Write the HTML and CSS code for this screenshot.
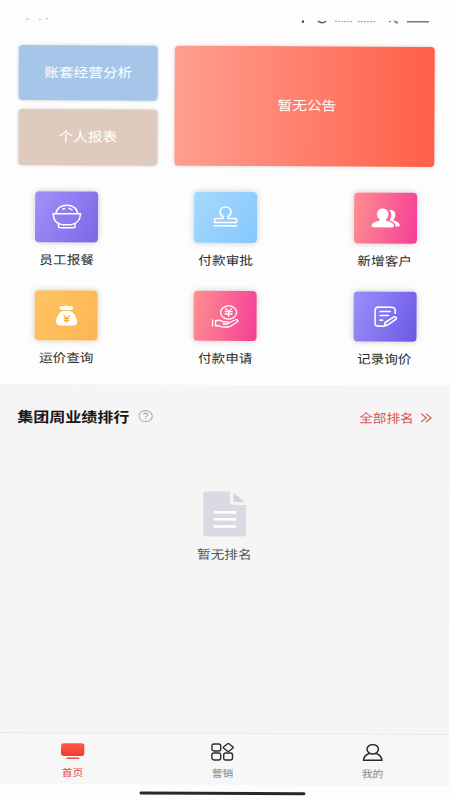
FILE: index.html
```html
<!DOCTYPE html>
<html lang="zh-CN">
<head>
<meta charset="utf-8">
<title>首页</title>
<link rel="stylesheet" href="styles.css">
</head>
<body>
<div class="screen">
  <header class="status">
    <svg width="452" height="26" viewBox="0 0 452 26" fill="none">
      <path d="M26 19h3M39 19h2M46 19l2-1" stroke="#bbb" stroke-width="1"/>
      <path d="M303 19.200v2.200" stroke="#333" stroke-width="2"/>
      <path d="M318 19.800q4.500 3.200 8 0" stroke="#555" stroke-width="1.500"/>
      <path d="M335 20h17M358 20h17" stroke="#aaa" stroke-width="1.200" stroke-dasharray="2 1"/>
      <path d="M389 20h2M394 19l3 2.200v-2" stroke="#777" stroke-width="1.300"/>
      <path d="M407 20h22" stroke="#777" stroke-width="1.500"/>
    </svg>
  </header>
  <main>
    <section class="cards">
      <div class="reports">
        <div class="card blue"><span class="txt">账套经营分析</span></div>
        <div class="card beige"><span class="txt">个人报表</span></div>
      </div>
      <div class="card notice"><span class="txt">暂无公告</span></div>
    </section>

    <section class="menu">
      <div class="item">
        <div class="tile violet">
          <svg width="63" height="50" viewBox="0 0 63 50" fill="none" stroke="#fff" stroke-width="1.500" stroke-linecap="round" stroke-linejoin="round">
            <path d="M18 22.500H45.500C45 29 41 33 36 33.500H27.500C22 33 18.500 29 18 22.500Z"/>
            <path d="M21 22C21.500 17 26 14 31.700 14S42 17 42.500 22"/>
            <path d="M23.500 32v3q0 1.500 2 1.500H38q2 0 2-1.500v-3M28 18l1.500-.8M34 17l3 1.500"/>
          </svg>
        </div>
        <span class="label">员工报餐</span>
      </div>
      <div class="item">
        <div class="tile sky">
          <svg width="63" height="50" viewBox="0 0 63 50" fill="none" stroke="#fff" stroke-width="1.600" stroke-linecap="round" stroke-linejoin="round">
            <path d="M29 26.500V24.500C27.200 23.500 26 22 26 20c0-3 2.500-5 5.500-5s5.500 2 5.500 5c0 2-1.200 3.500-3 4.500v2h7q1.500 0 1.500 1.500v2.500H20.500V28q0-1.500 1.500-1.500Z"/>
            <path d="M20.500 33.800H42.500"/>
          </svg>
        </div>
        <span class="label">付款审批</span>
      </div>
      <div class="item">
        <div class="tile pink">
          <svg width="63" height="50" viewBox="0 0 63 50" fill="#fff">
            <path d="M28.500 15.800c-3.400 0-5.500 2.500-5.500 5.500 0 2.400 1 4.200 2.500 5.200v1.500c-4 .8-8 2.500-8 5 0 1.200 1 1.700 2.500 1.700H37.500c1.500 0 2.500-.5 2.500-1.700 0-2.500-4-4.200-8-5v-1.500c1.500-1 2.500-2.800 2.500-5.200 0-3-2.500-5.500-6-5.500Z"/>
            <path d="M35.300 17.300c3.300-.6 6 1.400 6 4.700 0 2.200-.8 3.800-2 4.700v1.100c3.500.7 6.500 2.500 6.500 4.700 0 1-1 1.300-2 1.300h-2c-.3-3-2.500-4.800-6-6 0-1 0-1.300.5-1.800 1.500-3 1.300-6.200-1-8.700Z"/>
          </svg>
        </div>
        <span class="label">新增客户</span>
      </div>
      <div class="item">
        <div class="tile orange">
          <svg width="63" height="50" viewBox="0 0 63 50" fill="none">
            <path d="M25 17.500c0-2 2-2.300 3.500-1.200 1.500-1.500 4-1.500 5.500 0 2-1.300 4.500-.6 4.500 1.200 0 1.300-1.500 2-2.500 2.300H28c-1.500-.3-3-1-3-2.300ZM27.500 20.800H36c3.500 2 6.500 7 6.500 10.500 0 2.700-1.800 3.900-4.500 3.900H26c-2.700 0-4.500-1.200-4.500-3.900 0-3.500 2.500-8.500 6-10.500Z" fill="#fff"/>
            <path d="M29 25l3 3.200 3-3.200M29.200 28.300h5.600M29.200 30.300h5.600M32 28v4.500" stroke="#f3ab45" stroke-width="1.200"/>
          </svg>
        </div>
        <span class="label">运价查询</span>
      </div>
      <div class="item">
        <div class="tile pink">
          <svg width="63" height="50" viewBox="0 0 63 50" fill="none" stroke="#fff" stroke-width="1.300" stroke-linecap="round" stroke-linejoin="round">
            <ellipse cx="35" cy="21.500" rx="8" ry="6.700"/>
            <path d="M32 17.800l3 2.700 3-2.700M31.500 20.700h7M31.500 23h7M35 20.500v4.800"/>
            <path d="M19 29v6M22 29.500v5.300M22 30c3-1.500 5.500-.5 7.500.8h4c2 0 2 2.200 0 2.200h-4M35 32l6.500-3c2-1 4 .4 2 2l-7 4.500q-1 .5-2.500.5H28l-2.500-1.200H22"/>
          </svg>
        </div>
        <span class="label">付款申请</span>
      </div>
      <div class="item">
        <div class="tile indigo">
          <svg width="63" height="50" viewBox="0 0 63 50" fill="none" stroke="#fff" stroke-width="1.600" stroke-linecap="round" stroke-linejoin="round">
            <path d="M31 34.500H25q-3.500 0-3.500-3V18.500q0-3 3.500-3H38q3.500 0 3.500 3v3"/>
            <path d="M26.500 19.800H36.500M26.500 23.800H35M26.500 28.500h2.500"/>
            <path d="M31 33.200l.5-2.400 8.800-5.600q1-.5 1.800.3l.5.5q.6.800-.3 1.500l-8.500 6q-1.500.6-2.800-.3Z"/>
          </svg>
        </div>
        <span class="label">记录询价</span>
      </div>
    </section>

    <section class="ranking">
      <div class="heading">
        <h1>集团周业绩排行</h1>
        <svg class="help" width="15" height="13" viewBox="0 0 15 13" fill="none" stroke="#a8a8a8">
          <ellipse cx="7.500" cy="6.500" rx="6.600" ry="5.600" stroke-width="1"/>
          <path d="M5.500 5.200c0-2.300 4-2.300 4 0 0 1.300-2 1.300-2 2.600M7.500 8.800v1" stroke-width="1.100"/>
        </svg>
        <a class="all"><span class="alltext">全部排名</span>
          <svg width="12" height="10" viewBox="0 0 12 10" fill="none" stroke="#d9534f" stroke-width="1.200"><path d="M1 .8l5 4.200-5 4.200M5.800.8l5 4.200-5 4.200"/></svg>
        </a>
      </div>
      <div class="empty">
        <svg width="44" height="46" viewBox="0 0 44 46">
          <path d="M2 .5H27V9.500q0 4.500 5 4.500H43.500V43q0 2.500-2.500 2.500H3Q.5 45.500.5 43V2.500Q.5.500 2 .5Z" fill="#dadae5"/>
          <path d="M30.500 1.500L42 11H33q-2.500 0-2.500-2Z" fill="#d3d3de"/>
          <path d="M12 21.300H32.500M12 28.300H32.500M12 35.500H32.500" stroke="#fff" stroke-width="2.600" stroke-linecap="round"/>
        </svg>
        <span class="label">暂无排名</span>
      </div>
    </section>
  </main>

  <nav class="tabs">
    <div class="tab active">
      <svg width="24" height="18" viewBox="0 0 24 18">
        <defs><linearGradient id="tv" x1="0" y1="0" x2="0" y2="1"><stop offset="0" stop-color="#ff5a48"/><stop offset="1" stop-color="#f23a32"/></linearGradient></defs>
        <rect x=".3" y="1" width="23.400" height="12.600" rx="2.500" fill="url(#tv)"/>
        <path d="M6.500 15.900H18" stroke="#f04a42" stroke-width="1.600" stroke-linecap="round"/>
      </svg>
      <span>首页</span>
    </div>
    <div class="tab">
      <svg width="24" height="18" viewBox="0 0 24 18" fill="none" stroke="#2b2b2b" stroke-width="1.400">
        <rect x="1.200" y="1" width="8.800" height="7" rx="2"/>
        <rect x="1.200" y="10" width="8.800" height="7" rx="2"/>
        <rect x="13" y="10" width="8.800" height="7" rx="2"/>
        <path d="M16.500 1q1-.8 2 0l3.500 2.700q1 .8 0 1.600L18.500 8q-1 .8-2 0L13 5.300q-1-.8 0-1.600Z"/>
      </svg>
      <span>营销</span>
    </div>
    <div class="tab">
      <svg width="24" height="18" viewBox="0 0 24 18" fill="none" stroke="#2b2b2b" stroke-width="1.500" stroke-linejoin="round">
        <ellipse cx="12" cy="5.600" rx="5.700" ry="4.800"/>
        <path d="M8.500 9.800C5 11 3 13.500 2.800 16.700H21.200C21 13.500 19 11 15.500 9.800"/>
      </svg>
      <span>我的</span>
    </div>
  </nav>
  <footer class="home"><div class="bar"></div></footer>
</div>
</body>
</html>
```
FILE: styles.css
```css
* { box-sizing: border-box; }

body {
  margin: 0;
  height: 800px;
  overflow: hidden;
  background: #fdfdfd;
  font-family: "Noto Sans CJK SC", sans-serif;
  color: #2c2c2c;
}

.screen {
  width: 452px;
  height: 800px;
  display: flex;
  flex-direction: column;
  transform: rotate(0.25deg);
  transform-origin: 0 0;
}

.status { height: 45px; flex: none; }
.status svg { display: block; }

main { flex: 1; display: flex; flex-direction: column; }

.cards {
  height: 119.5px;
  display: flex;
  gap: 16.7px;
  padding: 0 17px 0 19px;
}

.reports {
  width: 139px;
  display: flex;
  flex-direction: column;
  gap: 9px;
}

.card {
  flex: 1;
  display: flex;
  align-items: center;
  justify-content: center;
  padding-bottom: 2px;
  border-radius: 4px;
  color: #fff;
  font-size: 13.2px;
  box-shadow: 0 0 4px rgba(0, 0, 0, 0.16);
}

.txt { transform: scaleX(1.11); white-space: nowrap; }
.blue { background: #a6c6e9; }
.beige { background: #dfcabe; }
.notice { background: linear-gradient(90deg, #ff9f90, #ff5f48); padding-left: 5px; }

.menu {
  height: 219.5px;
  padding: 26.5px 34.5px 0 36px;
  display: grid;
  grid-template-columns: repeat(3, 63px);
  grid-template-rows: 98.5px 98.5px;
  justify-content: space-between;
}

.item { display: flex; flex-direction: column; align-items: center; }

.tile {
  width: 63px;
  height: 50.5px;
  border-radius: 4px;
  box-shadow: 0 0 6px rgba(0, 0, 0, 0.2);
}

.tile svg { display: block; }
.violet { background: linear-gradient(120deg, #a092f8, #7b67e8); }
.sky { background: linear-gradient(120deg, #a5d9fc, #85c8fc); }
.pink { background: linear-gradient(100deg, #ff8f90, #f53e98); }
.orange { background: linear-gradient(120deg, #ffc364, #fcb653); }
.indigo { background: linear-gradient(110deg, #9c8ffa, #6c58e5); }

.label {
  font-size: 12.4px;
  line-height: 18px;
  white-space: nowrap;
  transform: scaleX(1.1);
}

.item .label { margin-top: 8px; }

.ranking { flex: 1; background: #f5f5f5; }

.heading {
  display: flex;
  align-items: center;
  height: 62px;
  padding: 0 18px 0 19px;
}

h1 {
  margin: 0;
  width: 113px;
  font-size: 14.5px;
  font-weight: 700;
  color: #161616;
  white-space: nowrap;
  transform: scaleX(1.105);
  transform-origin: 0 50%;
}

.help { margin-left: 7.5px; }

.all {
  margin-left: auto;
  padding-top: 1px;
  display: flex;
  align-items: center;
  gap: 6px;
  color: #d9534f;
}

.alltext {
  width: 55px;
  font-size: 12.4px;
  white-space: nowrap;
  transform: scaleX(1.1);
  transform-origin: 0 50%;
}

.empty {
  padding: 43.5px 0 0 1px;
  display: flex;
  flex-direction: column;
  align-items: center;
  color: #555;
}

.empty .label { margin-top: 8.5px; }

.tabs {
  height: 52px;
  flex: none;
  display: grid;
  grid-template-columns: repeat(3, 149.7px);
  padding-left: 1.5px;
  background: #f7f7f7;
  border-top: 1px solid #e9e9e9;
}

.tab {
  display: flex;
  flex-direction: column;
  align-items: center;
  padding-top: 8.5px;
  color: #888;
  font-size: 10px;
  line-height: 14px;
}

.tab span { margin-top: 5px; transform: scaleX(1.08); }
.active { color: #dc4c48; }

.home {
  height: 16px;
  flex: none;
  display: flex;
  justify-content: center;
  padding-top: 6.5px;
}

.bar {
  width: 166px;
  height: 3px;
  border-radius: 2px;
  background: #262b2a;
}
```
